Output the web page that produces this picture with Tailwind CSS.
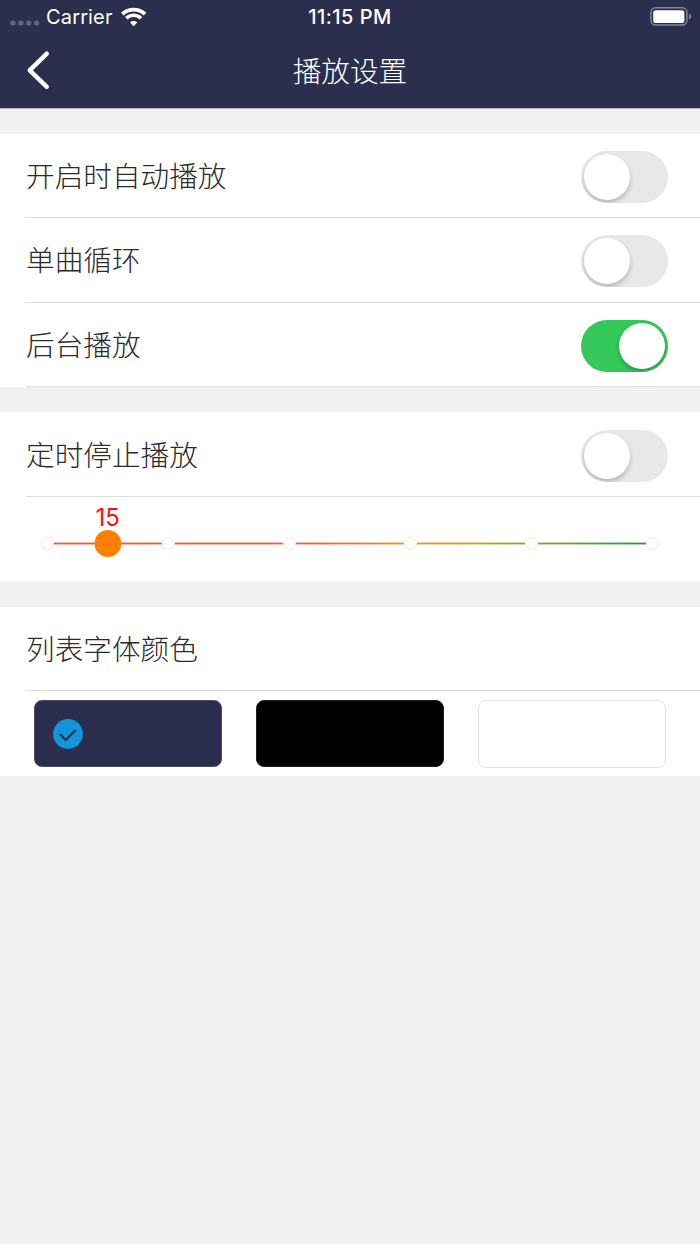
<!DOCTYPE html>
<html lang="zh-CN">
<head>
<meta charset="utf-8">
<title>播放设置</title>
<script src="https://cdn.jsdelivr.net/npm/@tailwindcss/browser@4"></script>
</head>
<body class="w-[700px] h-[1244px] overflow-hidden bg-[#f1f1f1] font-['Noto_Sans_CJK_SC',sans-serif] font-light text-[28.65px] text-[#2b2b2b]">
<header class="h-[109px] bg-[#2c2e4e] text-white border-b border-[#b4b4be]">
  <div class="h-[34px] grid grid-cols-3 font-['Inter',sans-serif] text-[20px] leading-[34px]">
    <div class="flex items-center pl-[10px]">
      <svg class="w-[30px] h-[34px] shrink-0" viewBox="0 0 30 34" fill="#5f617a"><circle cx="2.9" cy="23" r="2.8"/><circle cx="10.8" cy="23" r="2.8"/><circle cx="18.7" cy="23" r="2.8"/><circle cx="26.5" cy="23" r="2.8"/></svg>
      <span class="ml-[6px] w-[68px] whitespace-nowrap font-normal tracking-[0.15px]">Carrier</span>
      <svg class="ml-[6px] w-[28px] h-[34px] shrink-0" viewBox="120 0 28 34" fill="none" stroke="#fff"><path d="M122.3 14.1A16.4 16.4 0 0 1 145 14.1" stroke-width="3.7"/><path d="M126.3 18.3A10.5 10.5 0 0 1 141 18.3" stroke-width="3.6"/><path d="M133.65 26.2L130 22.4A5.2 5.2 0 0 1 137.3 22.4Z" fill="#fff" stroke="none"/></svg>
    </div>
    <div class="text-center whitespace-nowrap font-medium text-[20px] tracking-[0.45px]">11:15 PM</div>
    <div class="flex justify-end pr-[8px]">
      <svg class="w-[43px] h-[34px]" viewBox="649 0 43 34"><rect x="650.9" y="7.8" width="36" height="17.3" rx="4.8" fill="none" stroke="#858698" stroke-width="1.5"/><rect x="653.2" y="10.2" width="31.2" height="12.8" rx="2.6" fill="#fff"/><path d="M689 13.5q2.2 1 2.2 3t-2.2 3z" fill="#858698"/></svg>
    </div>
  </div>
  <div class="h-[74px] grid grid-cols-3 items-center">
    <svg class="ml-[24px] w-[30px] h-[42px]" viewBox="24 50 30 42" fill="none" stroke="#fff" stroke-width="4.4" stroke-linecap="round" stroke-linejoin="round"><path d="M46.8 53.7L29.7 70.3L46.8 86.8"/></svg>
    <h1 class="text-center leading-[72px] pb-[2px] whitespace-nowrap">播放设置</h1>
  </div>
</header>
<main>
  <section class="mt-[25px] bg-white">
    <div class="h-[84px] flex items-start justify-between ml-[26px] pr-[32px] border-b border-[#dedede]"><span class="leading-[82px]">开启时自动播放</span>
      <span class="mt-[17px] w-[87px] h-[52px] rounded-full bg-[#e8e8e8] p-[3px] overflow-hidden"><span class="block size-[46px] rounded-full bg-white shadow-[0_3px_5px_rgba(0,0,0,0.22)]"></span></span></div>
    <div class="h-[85px] flex items-start justify-between ml-[26px] pr-[32px] border-b border-[#dedede]"><span class="leading-[82px]">单曲循环</span>
      <span class="mt-[17px] w-[87px] h-[52px] rounded-full bg-[#e8e8e8] p-[3px] overflow-hidden"><span class="block size-[46px] rounded-full bg-white shadow-[0_3px_5px_rgba(0,0,0,0.22)]"></span></span></div>
    <div class="h-[84px] flex items-start justify-between ml-[26px] pr-[32px] border-b border-[#dedede]"><span class="leading-[81px]">后台播放</span>
      <span class="mt-[17px] w-[87px] h-[52px] rounded-full bg-[#34c759] p-[3px] overflow-hidden flex justify-end"><span class="block size-[46px] rounded-full bg-white shadow-[0_3px_5px_rgba(0,0,0,0.22)]"></span></span></div>
  </section>
  <section class="mt-[25px] bg-white">
    <div class="h-[85px] flex items-start justify-between ml-[26px] pr-[32px] border-b border-[#dedede]"><span class="leading-[83px]">定时停止播放</span>
      <span class="mt-[17.5px] w-[87px] h-[52px] rounded-full bg-[#e8e8e8] p-[3px] overflow-hidden"><span class="block size-[46px] rounded-full bg-white shadow-[0_3px_5px_rgba(0,0,0,0.22)]"></span></span></div>
    <svg class="block w-[700px] h-[84px]" viewBox="0 497 700 84">
      <defs><linearGradient id="g" gradientUnits="userSpaceOnUse" x1="47" x2="652" y1="0" y2="0"><stop offset="0" stop-color="#f8562f"/><stop offset=".42" stop-color="#f8562f"/><stop offset=".6" stop-color="#f59412"/><stop offset=".7" stop-color="#d59d10"/><stop offset=".83" stop-color="#7fa022"/><stop offset="1" stop-color="#10a145"/></linearGradient></defs>
      <rect x="47" y="542.6" width="605" height="1.8" fill="url(#g)"/>
      <g fill="#fff" stroke="#f0f0f6" stroke-width="1.4"><circle cx="47.3" cy="543.5" r="5.9"/><circle cx="168.4" cy="543.5" r="5.9"/><circle cx="289.4" cy="543.5" r="5.9"/><circle cx="410.4" cy="543.5" r="5.9"/><circle cx="531.4" cy="543.5" r="5.9"/><circle cx="652.5" cy="543.5" r="5.9"/></g>
      <circle cx="107.9" cy="543.5" r="13.4" fill="#ff8000"/>
      <text x="107.8" y="525.5" text-anchor="middle" fill="#ff1010" class="font-['Inter',sans-serif] font-normal text-[24px]">15</text>
    </svg>
  </section>
  <section class="mt-[26px] h-[169px] bg-white">
    <div class="h-[84px] ml-[26px] border-b border-[#dedede] leading-[81px]">列表字体颜色</div>
    <div class="flex pl-[34px] pt-[9px] gap-[34px]">
      <div class="w-[188px] h-[67px] rounded-[8px] bg-[#2c2e4e] border border-[#4b4d68] flex items-center pl-[17.5px]">
        <svg class="size-[30px]" viewBox="0 0 30 30"><circle cx="15" cy="15" r="14.9" fill="#1296db"/><path d="M7.6 15.8L12.7 21L22.2 11.5" fill="none" stroke="#2c2e4e" stroke-width="2.1" stroke-linecap="round"/></svg>
      </div>
      <div class="w-[188px] h-[67px] rounded-[8px] bg-black border border-[#222]"></div>
      <div class="w-[188px] h-[68px] rounded-[8px] bg-white border border-[#e0e0e0]"></div>
    </div>
  </section>
</main>
</body>
</html>
